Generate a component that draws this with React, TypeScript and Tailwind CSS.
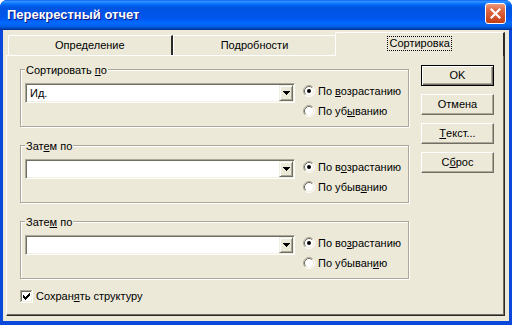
import React from 'react'

const FONT = "font-['Liberation_Sans',Arial,sans-serif]"

function U({ children }: { children: React.ReactNode }) {
  return <span className="underline underline-offset-1">{children}</span>
}

function Radio({ checked }: { checked?: boolean }) {
  return (
    <svg width="12" height="12" viewBox="0 0 12 12" className="shrink-0">
      <circle cx="6" cy="6" r="4.2" fill="#fff" />
      <path d="M2.11 9.89 A5.5 5.5 0 0 1 9.89 2.11" fill="none" stroke="#ACA899" />
      <path d="M9.89 2.11 A5.5 5.5 0 0 1 2.11 9.89" fill="none" stroke="#fff" />
      <path d="M2.82 9.18 A4.5 4.5 0 0 1 9.18 2.82" fill="none" stroke="#716F64" />
      <path d="M9.18 2.82 A4.5 4.5 0 0 1 2.82 9.18" fill="none" stroke="#F1EFE2" />
      {checked && <circle cx="6" cy="6" r="2" fill="#000" />}
    </svg>
  )
}

function RadioRow({ checked, children }: { checked?: boolean; children: React.ReactNode }) {
  return (
    <div className="h-[20px] flex items-center gap-[3px]">
      <Radio checked={checked} />
      <span className="leading-[13px]">{children}</span>
    </div>
  )
}

function Combo({ value }: { value?: string }) {
  return (
    <div className="mt-[2px] w-[270px] h-[20px] flex p-[1px] bg-white border border-t-[#ACA899] border-l-[#ACA899] border-r-white border-b-white shadow-[inset_1px_1px_0_#716F64,inset_-1px_-1px_0_#F1EFE2]">
      <div className="flex-1 flex items-center pl-[3px] leading-[13px]">{value}</div>
      <div className="w-[14px] h-full flex items-center justify-center bg-[#ECE9D8] border border-t-[#F1EFE2] border-l-[#F1EFE2] border-r-[#716F64] border-b-[#716F64] shadow-[inset_1px_1px_0_#fff,inset_-1px_-1px_0_#ACA899]">
        <svg width="7" height="4" viewBox="0 0 7 4" shapeRendering="crispEdges">
          <path d="M0 0h7v1H0zM1 1h5v1H1zM2 2h3v1H2zM3 3h1v1H3z" fill="#000" />
        </svg>
      </div>
    </div>
  )
}

function Group({
  title,
  value,
  asc,
  desc,
}: {
  title: React.ReactNode
  value?: string
  asc: React.ReactNode
  desc: React.ReactNode
}) {
  return (
    <div className="relative h-[58px] flex items-start pt-[11px] pl-[4px] border border-[#ACA899] shadow-[inset_1px_1px_0_#fff,1px_1px_0_#fff]">
      {/* label sits over the etched frame line */}
      <span className="absolute left-[4px] -top-[6px] px-[1px] bg-[#ECE9D8] leading-[13px]">{title}</span>
      <Combo value={value} />
      <div className="ml-[8px] flex flex-col">
        <RadioRow checked>{asc}</RadioRow>
        <RadioRow>{desc}</RadioRow>
      </div>
    </div>
  )
}

function Button({ children, isDefault }: { children: React.ReactNode; isDefault?: boolean }) {
  return (
    <div
      className={
        isDefault
          ? 'w-[73px] h-[21px] flex items-center justify-center bg-[#ECE9D8] border border-black shadow-[inset_1px_1px_0_#fff,inset_-1px_-1px_0_#716F64,inset_-2px_-2px_0_#ACA899] leading-[13px]'
          : 'w-[73px] h-[21px] flex items-center justify-center bg-[#ECE9D8] border border-t-white border-l-white border-r-[#716F64] border-b-[#716F64] shadow-[inset_-1px_-1px_0_#ACA899] leading-[13px]'
      }
    >
      {children}
    </div>
  )
}

export default function App() {
  return (
    <div className={`w-[512px] h-[325px] flex flex-col bg-[#0A48DB] rounded-t-[7px] overflow-hidden text-[11px] text-black ${FONT}`}>
      {/* ── Title bar ─────────────────────────────────────────────── */}
      <div className="h-[30px] shrink-0 flex items-center justify-between pl-[7px] pr-[6px] bg-[linear-gradient(180deg,#0058EE_0%,#3593FF_4%,#288EFF_7%,#127DFF_10%,#036FFC_14%,#0262EE_18%,#0057E5_24%,#0054E3_30%,#0055EB_56%,#005BF5_66%,#026AFE_76%,#0062EF_86%,#0052D6_92%,#0040AB_96%,#003092_100%)]">
        <span className="text-white font-bold text-[13px] leading-[16px] [text-shadow:1px_1px_0_#0A1883]">
          Перекрестный отчет
        </span>
        <div className="w-[21px] h-[21px] mb-[3px] rounded-[3px] border border-white flex items-center justify-center bg-[linear-gradient(180deg,#EA9C80_0%,#DF6A45_30%,#D2502A_70%,#C23D14_100%)]">
          <svg width="11" height="11" viewBox="0 0 11 11">
            <path d="M1.5 1.5L9.5 9.5M9.5 1.5L1.5 9.5" stroke="#fff" strokeWidth="2.2" strokeLinecap="square" />
          </svg>
        </div>
      </div>

      {/* ── Client area ───────────────────────────────────────────── */}
      <div className="flex-1 mx-[3px] mb-[4px] bg-[#ECE9D8] flex flex-col pt-[2px] pl-[3px] pr-[4px] pb-[5px]">
        {/* Tabs */}
        <div className="h-[23px] shrink-0 flex items-end pl-[2px]">
          <div className="w-[165px] h-[20px] flex items-center justify-center border-t border-l border-white border-r-2 border-r-[#2a2a2a] rounded-tl-[2px] leading-[13px]">
            Определение
          </div>
          <div className="w-[163px] h-[20px] flex items-center justify-center border-t border-l border-white leading-[13px]">
            Подробности
          </div>
          <div className="relative z-10 w-[170px] h-[24px] -mb-px pb-[2px] flex items-center justify-center bg-[#ECE9D8] border-t border-l border-white border-r-2 border-r-[#2a2a2a] rounded-tl-[2px]">
            <span className="border border-dotted border-black px-[1px] leading-[13px]">Сортировка</span>
          </div>
        </div>

        {/* Tab page */}
        <div className="flex-1 flex border border-t-white border-l-white border-r-[#2a2a2a] border-b-[#2a2a2a] shadow-[inset_-1px_-1px_0_#716F64]">
          <div className="w-[389px] ml-[13px] mt-[13px] flex flex-col">
            <Group
              title={<>Сортировать <U>п</U>о</>}
              value="Ид."
              asc={<>По <U>в</U>озрастанию</>}
              desc={<>По уб<U>ы</U>ванию</>}
            />
            <div className="mt-[18px]">
              <Group
                title={<>Зат<U>е</U>м по</>}
                asc={<>По в<U>о</U>зрастанию</>}
                desc={<>По убыв<U>а</U>нию</>}
              />
            </div>
            <div className="mt-[18px]">
              <Group
                title={<>Зате<U>м</U> по</>}
                asc={<>По во<U>з</U>растанию</>}
                desc={<>По убыван<U>и</U>ю</>}
              />
            </div>

            <div className="mt-[11px] flex items-center gap-[3px]">
              <svg width="13" height="13" viewBox="0 0 13 13" shapeRendering="crispEdges" className="shrink-0">
                <rect x="0" y="0" width="13" height="13" fill="#fff" />
                <path d="M0 0h12v1H1v11H0z" fill="#ACA899" />
                <path d="M1 1h10v1H2v9H1z" fill="#716F64" />
                <path d="M11 1h1v11H1v-1h10z" fill="#F1EFE2" />
                <path d="M3 5h1v1h1v1h1V6h1V5h1V4h1V3h1v3h-1v1H8v1H7v1H6v1H5V9H4V8H3z" fill="#000" />
              </svg>
              <span className="leading-[13px]">
                Сохран<U>я</U>ть структуру
              </span>
            </div>
          </div>

          <div className="ml-[12px] mt-[9px] flex flex-col gap-[8px]">
            <Button isDefault>OK</Button>
            <Button>Отмена</Button>
            <Button>
              <U>Т</U>екст...
            </Button>
            <Button>
              С<U>б</U>рос
            </Button>
          </div>
        </div>
      </div>
    </div>
  )
}
